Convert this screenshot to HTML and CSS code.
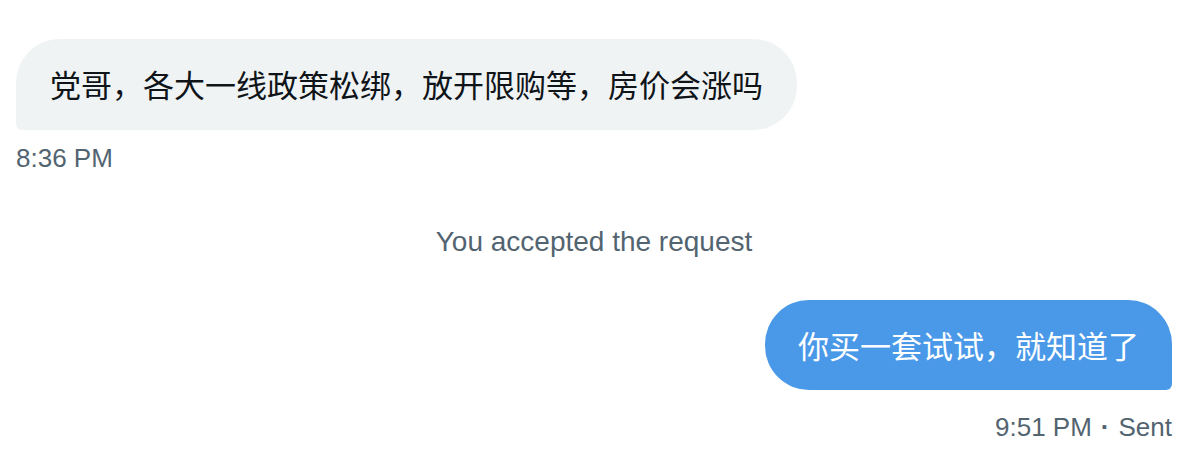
FILE: index.html
```html
<!DOCTYPE html>
<html lang="zh-CN">
<head>
    <meta charset="UTF-8">
    <title>Messages</title>
    <link rel="stylesheet" href="styles.css">
</head>
<body>
    <div id="conversation">
        <div class="msg msg-in">
            <div class="bubble">党哥，各大一线政策松绑，放开限购等，房价会涨吗</div>
            <div class="meta">8:36 PM</div>
        </div>
        <div class="notice">You accepted the request</div>
        <div class="msg msg-out">
            <div class="bubble">你买一套试试，就知道了</div>
            <div class="meta">9:51 PM<span class="dot">·</span>Sent</div>
        </div>
    </div>
</body>
</html>
```

FILE: styles.css
```css
*{
    padding:0;
    margin:0;
    box-sizing:border-box;
}
body{
    background:#fff;
    font-family:"Liberation Sans","Noto Sans CJK SC",sans-serif;
    color:#0f1419;
}
#conversation{
    width:1200px;
    padding:39px 28px 0 16px;
    display:flex;
    flex-direction:column;
}
.msg{
    display:flex;
    flex-direction:column;
}
.msg-in{
    align-items:flex-start;
}
.msg-out{
    align-items:flex-end;
    margin-top:42px;
}
.bubble{
    font-family:"Noto Sans CJK SC","Liberation Sans",sans-serif;
    font-size:31px;
    line-height:41px;
    padding:24px 34px 26px;
    white-space:nowrap;
}
.msg-in .bubble{
    background:#eff3f4;
    color:#0f1419;
    border-radius:44px 44px 44px 6px;
}
.msg-out .bubble{
    background:#4a99e9;
    color:#fff;
    padding:24px 33px 25px;
    border-radius:44px 44px 6px 44px;
}
.meta{
    font-size:26px;
    line-height:30px;
    color:#536471;
    margin-top:13px;
}
.msg-out .meta{
    margin-top:22px;
}
.dot{
    margin:0 9px;
    font-weight:bold;
}
.notice{
    margin-top:53px;
    text-align:center;
    font-size:28px;
    line-height:32px;
    color:#536471;
}
```
